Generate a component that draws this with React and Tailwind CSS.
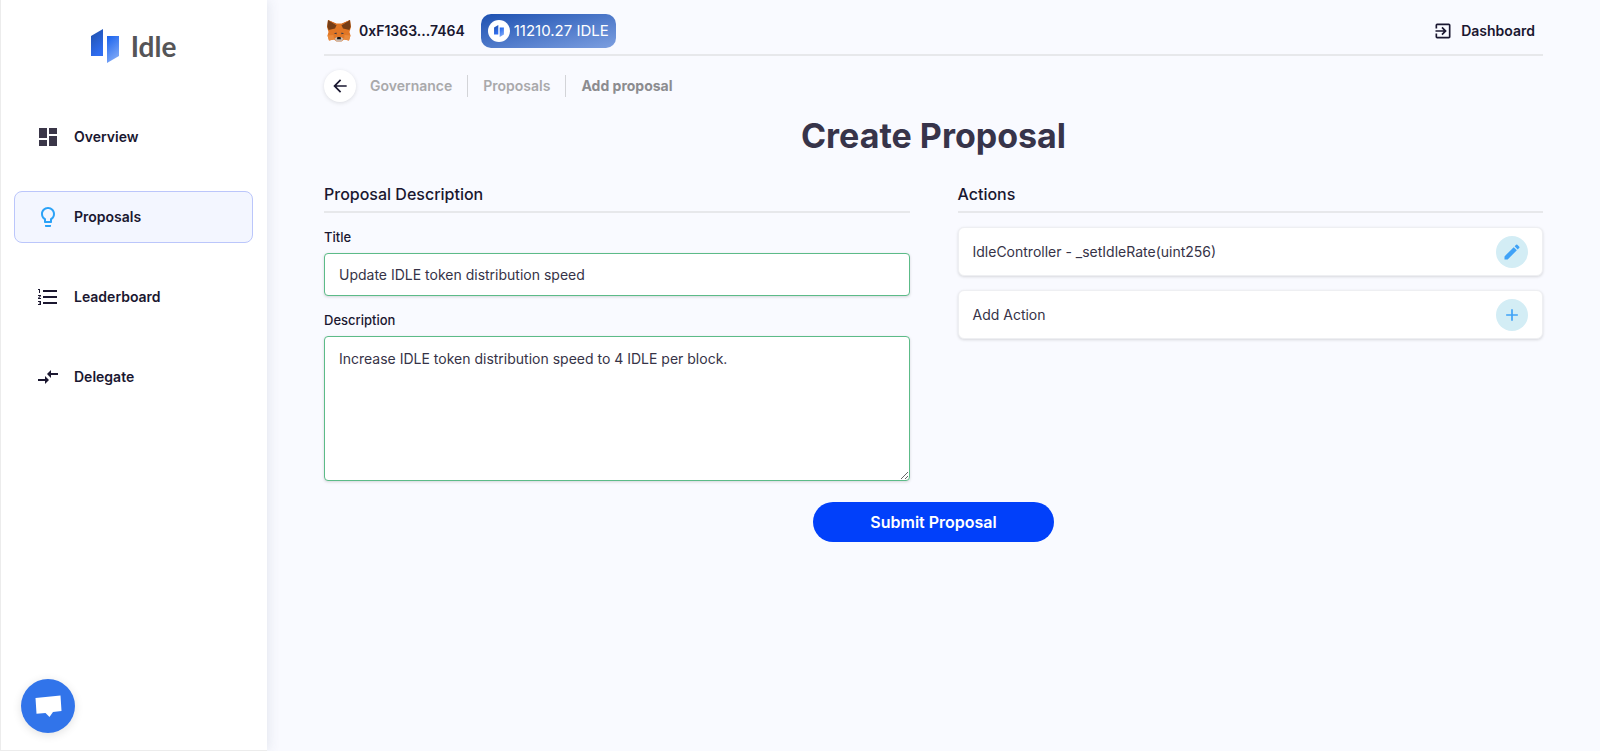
import { useState } from 'react';
import {
  MdAdd,
  MdArrowBack,
  MdCompareArrows,
  MdDashboard,
  MdEdit,
  MdExitToApp,
  MdFormatListNumbered,
  MdLightbulbOutline,
} from 'react-icons/md';

const NAV_ITEMS = [
  { label: 'Overview', icon: MdDashboard, iconClass: 'text-[#3a3648]' },
  { label: 'Proposals', icon: MdLightbulbOutline, iconClass: 'text-[#2ba2f7]' },
  { label: 'Leaderboard', icon: MdFormatListNumbered, iconClass: 'text-[#1b1730]' },
  { label: 'Delegate', icon: MdCompareArrows, iconClass: 'text-[#1b1730]' },
];

const ACTIONS = [
  { label: 'IdleController - _setIdleRate(uint256)', icon: MdEdit, hint: 'Edit action' },
  { label: 'Add Action', icon: MdAdd, hint: 'Add action' },
];

function IdleMark({ className }) {
  return (
    <svg viewBox="0 0 28 34" className={className} aria-hidden="true">
      <defs>
        <linearGradient id="markLeft" x1="0" y1="0" x2="0.4" y2="1">
          <stop offset="0" stopColor="#1f4fa8" />
          <stop offset="1" stopColor="#2f6df0" />
        </linearGradient>
        <linearGradient id="markRight" x1="0.2" y1="0" x2="0.6" y2="1">
          <stop offset="0" stopColor="#1f66ee" />
          <stop offset="1" stopColor="#84acf7" />
        </linearGradient>
      </defs>
      <path d="M0 7 L12 0 V27 H0 Z" fill="url(#markLeft)" />
      <path d="M16 7 H28 V27 L16 34 Z" fill="url(#markRight)" />
    </svg>
  );
}

function FoxIcon({ className }) {
  return (
    <svg viewBox="0 0 24 22" className={className} aria-hidden="true">
      <path d="M1 0 L9 3.5 H15 L23 0 L24 7 L22.5 12 L23.5 15.5 L22 20.5 L17 19.5 L14.5 21.5 H9.5 L7 19.5 L2 20.5 L0.5 15.5 L1.5 12 L0 7 Z" fill="#e27726" />
      <path d="M0.5 15.5 L6.5 15 L7 19.5 L2 20.5 Z M23.5 15.5 L17.5 15 L17 19.5 L22 20.5 Z" fill="#e98a3c" />
      <path d="M1 0 L9.5 5.2 L8 8.5 L1.6 10 L0.3 6.5 Z M23 0 L14.5 5.2 L16 8.5 L22.4 10 L23.7 6.5 Z" fill="#763d16" />
      <path d="M1 0 L9 3.5 L9.5 5.2 Z M23 0 L15 3.5 L14.5 5.2 Z" fill="#c9651f" />
      <path d="M6.8 13.6 L9.4 12.4 L9.8 14.2 Z M17.2 13.6 L14.6 12.4 L14.2 14.2 Z" fill="#3a3a48" />
      <path d="M7.5 18.5 L10 17 H14 L16.5 18.5 L14.5 21.5 H9.5 Z" fill="#c9b8ad" />
      <path d="M10.4 17 H13.6 L14 19.2 H10 Z" fill="#161616" />
    </svg>
  );
}

function SectionTitle({ children }) {
  return (
    <h2 className="border-b-2 border-[#e7e8eb] pb-[5px] text-base leading-6 font-medium">{children}</h2>
  );
}

function Sidebar() {
  return (
    <aside className="flex w-[267px] shrink-0 flex-col border-b border-l border-[#ececec] bg-white pr-3.5 pl-[13px] shadow-[1px_0_12px_rgba(60,70,110,0.12)]">
      <a href="#home" className="flex items-center justify-center gap-3 pt-[29px]">
        <IdleMark className="h-[34px] w-7" />
        <span className="font-['Lato',sans-serif] text-[28px] leading-8 font-bold text-[#555557]">Idle</span>
      </a>
      <nav className="mt-12 flex flex-col gap-7">
        {NAV_ITEMS.map(({ label, icon: Icon, iconClass }) => (
          <a
            key={label}
            href={`#${label.toLowerCase()}`}
            className={
              label === 'Proposals'
                ? 'flex h-[52px] items-center gap-3.5 rounded-lg border border-[#bbc6fb] bg-[#f3f6ff] px-[21px]'
                : 'flex h-[52px] items-center gap-3.5 rounded-lg border border-transparent px-[21px]'
            }
          >
            <Icon size={24} className={iconClass} />
            <span className="text-sm font-semibold">{label}</span>
          </a>
        ))}
      </nav>
      <button
        type="button"
        aria-label="Open chat"
        className="mt-auto mb-[17px] ml-[7px] flex size-[54px] items-center justify-center rounded-full bg-[#3174ea] shadow-[0_2px_10px_rgba(0,0,0,0.12)]"
      >
        <svg viewBox="0 0 27 23" className="h-[23px] w-[27px]" aria-hidden="true">
          <path d="M0.5 3 L25.5 0.5 L26.5 16 L18 17 L14.5 22 L10.5 18 L1.5 18.8 Z" fill="#fff" />
        </svg>
      </button>
    </aside>
  );
}

function Header() {
  return (
    <header className="flex h-14 items-center justify-between border-b-2 border-[#e7e8eb] pt-2 pr-2">
      <div className="flex items-center">
        <FoxIcon className="ml-[3px] h-[22px] w-6" />
        <span className="ml-2 text-sm font-semibold">0xF1363...7464</span>
        <div className="ml-4 flex h-[34px] items-center gap-1 rounded-[10px] bg-linear-to-br from-[#1c50b1] to-[#7d9fe0] px-[7px] text-white">
          <span className="flex size-[22px] items-center justify-center rounded-full bg-white">
            <IdleMark className="h-3 w-2.5" />
          </span>
          <span className="text-[15px]">11210.27 IDLE</span>
        </div>
      </div>
      <a href="#dashboard" className="flex items-center gap-2 text-sm font-semibold">
        <MdExitToApp size={20} />
        Dashboard
      </a>
    </header>
  );
}

function Breadcrumbs() {
  return (
    <div className="mt-3.5 flex items-center gap-3.5">
      <button
        type="button"
        aria-label="Back"
        className="flex size-8 items-center justify-center rounded-full bg-white shadow-[0_1px_4px_rgba(0,0,0,0.12)]"
      >
        <MdArrowBack size={20} />
      </button>
      <nav aria-label="Breadcrumb" className="flex items-center text-sm leading-[22px] font-semibold text-[#a9a9ab]">
        <a href="#governance" className="pr-[15px]">Governance</a>
        <a href="#proposals" className="border-l border-[#d3d4d8] px-[15px]">Proposals</a>
        <span className="border-l border-[#d3d4d8] pl-[15px] font-bold text-[#8c8c90]">Add proposal</span>
      </nav>
    </div>
  );
}

export default function App() {
  const [title, setTitle] = useState('Update IDLE token distribution speed');
  const [description, setDescription] = useState('Increase IDLE token distribution speed to 4 IDLE per block.');

  return (
    <div className="flex min-h-screen bg-[#f9faff] font-['Inter',sans-serif] text-[#1a1730]">
      <Sidebar />
      <main className="min-w-0 flex-1 px-[57px]">
        <Header />
        <Breadcrumbs />
        <h1 className="mt-3 text-center text-[34px] leading-[44px] font-bold text-[#37344a]">Create Proposal</h1>

        <form onSubmit={(e) => e.preventDefault()}>
          <div className="mt-6 grid grid-cols-2 gap-12">
            <section>
              <SectionTitle>Proposal Description</SectionTitle>
              <label htmlFor="title" className="mt-3.5 block text-[13px] leading-5 font-medium">Title</label>
              <input
                id="title"
                type="text"
                value={title}
                onChange={(e) => setTitle(e.target.value)}
                className="mt-1.5 block h-[43px] w-full rounded border border-[#5cbb88] bg-white px-3.5 text-sm text-[#363347] shadow-[0_1px_3px_rgba(0,0,0,0.15)] outline-none"
              />
              <label htmlFor="description" className="mt-3.5 block text-[13px] leading-5 font-medium">Description</label>
              <textarea
                id="description"
                value={description}
                onChange={(e) => setDescription(e.target.value)}
                className="mt-1.5 block h-[145px] w-full rounded border border-[#5cbb88] bg-white px-3.5 py-3 text-sm text-[#363347] shadow-[0_1px_3px_rgba(0,0,0,0.15)] outline-none"
              />
            </section>

            <section>
              <SectionTitle>Actions</SectionTitle>
              <ul className="mt-3.5 space-y-3.5">
                {ACTIONS.map(({ label, icon: Icon, hint }) => (
                  <li
                    key={label}
                    className="flex h-[49px] items-center justify-between rounded-md border border-[#eeeff2] bg-white px-3.5 text-sm text-[#363347] shadow-[0_1px_3px_rgba(0,0,0,0.14)]"
                  >
                    {label}
                    <button
                      type="button"
                      aria-label={hint}
                      className="flex size-8 items-center justify-center rounded-full bg-[#d3edf5] text-[#3fa2f7]"
                    >
                      <Icon size={20} />
                    </button>
                  </li>
                ))}
              </ul>
            </section>
          </div>

          <button
            type="submit"
            className="mx-auto mt-[21px] block h-10 w-[241px] rounded-full bg-[#0140fa] text-base font-semibold text-white"
          >
            Submit Proposal
          </button>
        </form>
      </main>
    </div>
  );
}
